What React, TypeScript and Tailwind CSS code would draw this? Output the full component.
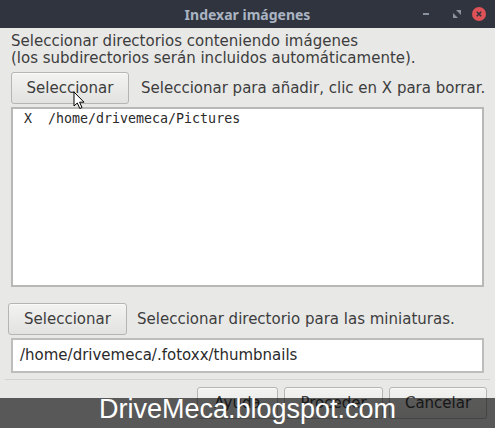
import React from "react";

const sans = { fontFamily: '"DejaVu Sans", "Noto Sans", sans-serif' };

function GtkButton({ label, className }: { label: string; className: string }) {
  return (
    <div
      className={
        "flex items-center justify-center rounded-[3px] border border-[#b5b5b2] bg-gradient-to-b from-[#f3f3f2] to-[#e2e2e0] text-[15px] text-[#3d3d3d] shadow-[inset_0_1px_0_#fafafa] " +
        className
      }
    >
      {label}
    </div>
  );
}

function TitleBar() {
  return (
    <div className="relative flex h-[28px] items-center justify-center bg-[#2f343f]">
      <span
        className="text-[14px] font-bold text-[#abb4c2]"
        style={{ fontFamily: '"Noto Sans", "DejaVu Sans", sans-serif' }}
      >
        Indexar imágenes
      </span>
      <div className="absolute right-[9px] top-0 flex h-[28px] items-center">
        {/* minimize */}
        <div className="flex w-[31px] items-center justify-center">
          <div className="h-[2px] w-[6px] bg-[#8b93a0]" />
        </div>
        {/* maximize / restore */}
        <div className="flex w-[31px] items-center justify-center">
          <svg width="8" height="8" viewBox="0 0 8 8">
            <path d="M3 0 H8 V5 Z" fill="#8b93a0" />
            <path d="M0 3 V8 H5 Z" fill="#8b93a0" />
          </svg>
        </div>
        {/* close */}
        <div className="flex h-[14px] w-[14px] items-center justify-center rounded-full bg-[#dd5157]">
          <svg width="6" height="6" viewBox="0 0 6 6">
            <path d="M0.8 0.8 L5.2 5.2 M5.2 0.8 L0.8 5.2" stroke="#2f343f" strokeWidth="1.6" />
          </svg>
        </div>
      </div>
    </div>
  );
}

function Cursor() {
  return (
    <svg
      className="absolute left-[73px] top-[91px]"
      width="13"
      height="19"
      viewBox="0 0 13 19"
    >
      <path
        d="M1 1 L1 15 L4.3 12 L6.8 17.5 L9 16.5 L6.6 11.2 L11 11.2 Z"
        fill="#ffffff"
        stroke="#000000"
        strokeWidth="1"
        strokeLinejoin="round"
      />
    </svg>
  );
}

export default function App() {
  return (
    <div
      className="relative h-[428px] w-[495px] overflow-hidden bg-[#e8e8e7] text-[#3d3d3d]"
      style={sans}
    >
      <TitleBar />

      <div className="flex flex-col">
        <div className="mt-[5px] pl-[11px] text-[15px] leading-[17px]">
          <div>Seleccionar directorios conteniendo imágenes</div>
          <div>(los subdirectorios serán incluidos automáticamente).</div>
        </div>

        <div className="mt-[5px] flex h-[32px] items-center pl-[11px]">
          <GtkButton label="Seleccionar" className="h-[32px] w-[118px]" />
          <span className="ml-[12px] text-[15px]">
            Seleccionar para añadir, clic en X para borrar.
          </span>
        </div>

        <div className="ml-[11px] mt-[3px] h-[180px] w-[473px] border-2 border-[#b8b8b6] bg-white pl-[11px] pt-[2px]">
          <div
            className="whitespace-pre text-[13.3px] leading-[16px] text-[#2a2a2a]"
            style={{ fontFamily: '"DejaVu Sans Mono", "Liberation Mono", monospace' }}
          >
            {"X  /home/drivemeca/Pictures"}
          </div>
        </div>

        <div className="mt-[16px] flex h-[32px] items-center pl-[8px]">
          <GtkButton label="Seleccionar" className="h-[32px] w-[119px]" />
          <span className="ml-[10px] text-[15px]">
            Seleccionar directorio para las miniaturas.
          </span>
        </div>

        <div className="ml-[11px] mt-[3px] flex h-[35px] w-[473px] items-center border-2 border-[#bdbdbb] bg-white pl-[7px] text-[15px] text-[#2a2a2a]">
          /home/drivemeca/.fotoxx/thumbnails
        </div>

        <div className="ml-[5px] mt-[6px] h-[1px] w-[485px] bg-[#d2d2d0]" />

        <div className="mt-[7px] flex justify-end gap-[6px] pr-[8px]">
          <GtkButton label="Ayuda" className="h-[32px] w-[81px]" />
          <GtkButton label="Proceder" className="h-[32px] w-[99px]" />
          <GtkButton label="Cancelar" className="h-[32px] w-[98px]" />
        </div>
      </div>

      <Cursor />

      {/* blog watermark band */}
      <div className="absolute left-0 top-[398px] h-[30px] w-[495px] bg-black/[0.62]">
        <div
          className="absolute left-0 top-[-2px] w-full text-center text-[27px] leading-[27px] text-white"
          style={{ fontFamily: '"Liberation Sans", Arial, sans-serif' }}
        >
          DriveMeca.blogspot.com
        </div>
      </div>
    </div>
  );
}
